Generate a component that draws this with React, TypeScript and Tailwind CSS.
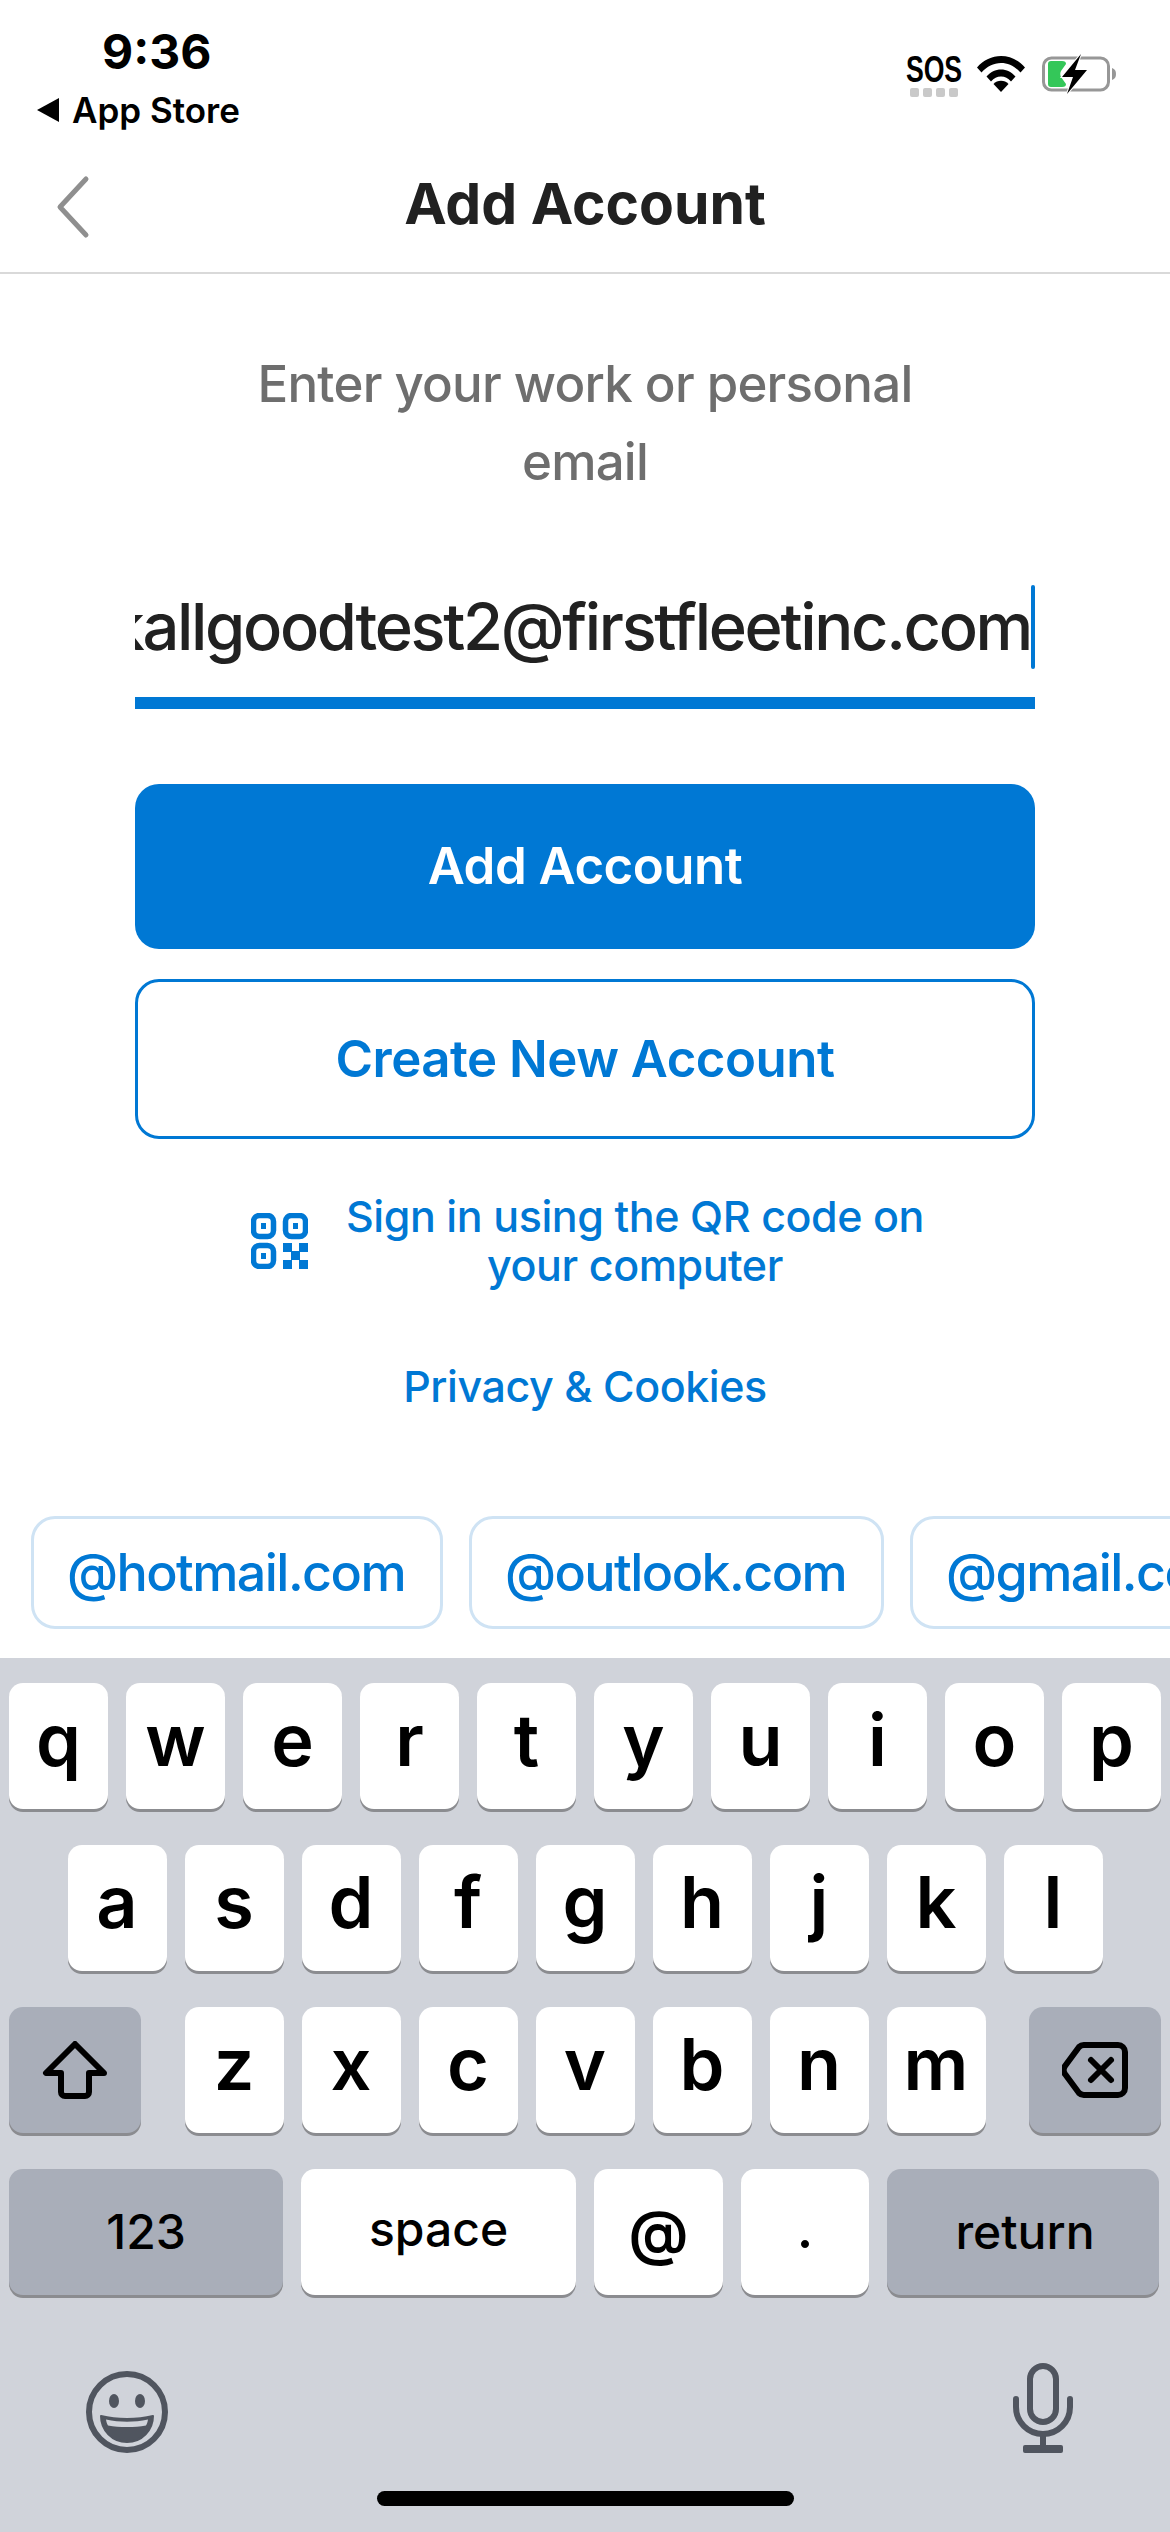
const row1 = ['q', 'w', 'e', 'r', 't', 'y', 'u', 'i', 'o', 'p'];
const row2 = ['a', 's', 'd', 'f', 'g', 'h', 'j', 'k', 'l'];
const row3 = ['z', 'x', 'c', 'v', 'b', 'n', 'm'];

function LetterKey({ label }: { label: string }) {
  return (
    <div className="flex h-[126px] w-[99px] items-center justify-center rounded-[14px] bg-white pb-[12px] text-[72px] font-semibold text-black shadow-[0_3px_0_#8b8c90]">
      {label}
    </div>
  );
}

function QrIcon() {
  return (
    <svg width="57" height="56" viewBox="0 0 57 56" fill="none" className="shrink-0">
      <rect x="2.500" y="2.500" width="20" height="21" rx="6" stroke="#0078d4" strokeWidth="5.500" />
      <rect x="34.500" y="2.500" width="20" height="21" rx="6" stroke="#0078d4" strokeWidth="5.500" />
      <rect x="2.500" y="32.500" width="20" height="21" rx="6" stroke="#0078d4" strokeWidth="5.500" />
      <rect x="10" y="10" width="5" height="6" fill="#0078d4" />
      <rect x="42" y="10" width="5" height="6" fill="#0078d4" />
      <rect x="10" y="40" width="5" height="6" fill="#0078d4" />
      <path d="M32 30h9v9h-9zM48 30h9v9h-9zM40 38h9v9h-9zM32 47h9v9h-9zM48 47h9v9h-9z" fill="#0078d4" />
    </svg>
  );
}

function StatusIcons() {
  return (
    <div className="flex items-start pt-[55px] pr-[52px]">
      <div className="mr-[16px] flex w-[54px] flex-col items-center">
        <span className="[transform:scaleX(0.74)] text-[36px] leading-[30px] font-bold text-black [font-family:'Liberation_Sans',sans-serif]">SOS</span>
        <div className="mt-[3px] flex gap-[4px]">
          <span className="h-[9px] w-[9px] rounded-[2px] bg-[#c9c9c9]" />
          <span className="h-[9px] w-[9px] rounded-[2px] bg-[#c9c9c9]" />
          <span className="h-[9px] w-[9px] rounded-[2px] bg-[#c9c9c9]" />
          <span className="h-[9px] w-[9px] rounded-[2px] bg-[#c9c9c9]" />
        </div>
      </div>
      <svg width="48" height="38" viewBox="0 0 48 38" className="mr-[17px]">
        <path d="M0 12.500C6.500 5 15 1 24 1s17.500 4 24 11.500l-4.500 5C38 11.500 31.500 8 24 8S10 11.500 4.500 17.500z" fill="#000" />
        <path d="M9.500 21.500C13.500 17 18.500 14.500 24 14.500s10.500 2.500 14.500 7l-4.500 5c-3-3.200-6-5-10-5s-7 1.800-10 5z" fill="#000" />
        <path d="M24 37l-7.500-8c2-2 4.500-3.200 7.500-3.200s5.500 1.200 7.500 3.200z" fill="#000" />
      </svg>
      <svg width="76" height="40" viewBox="0 0 76 40" className="-mt-[1px]">
        <rect x="1.500" y="4" width="65" height="32" rx="8" fill="none" stroke="#979797" strokeWidth="3" />
        <path d="M70 14c3 1 4 3 4 6s-1 5-4 6z" fill="#979797" />
        <path d="M6 10a3 3 0 0 1 3-3h11c3 0 4 1 4 3l-5 7c-1 2-1 4 0 6l5 7c0 2-1 3-4 3H9a3 3 0 0 1-3-3z" fill="#34c759" />
        <path d="M39 0L20 23h11l-6 17 20-24H33z" fill="#000" stroke="#fff" strokeWidth="2" paintOrder="stroke" />
      </svg>
    </div>
  );
}

export default function App() {
  return (
    <div className="flex h-[2532px] w-[1170px] flex-col overflow-hidden bg-white [font-family:Inter,'Liberation_Sans',sans-serif]">
      {/* Status bar */}
      <div className="flex h-[144px] items-start justify-between">
        <div className="flex flex-col pl-[37px]">
          <span className="mt-[29px] ml-[65px] text-[48px] leading-[46px] font-bold text-black">9:36</span>
          <div className="mt-[15px] flex items-center">
            <span className="mr-[13px] h-0 w-0 border-y-[12px] border-r-[22px] border-y-transparent border-r-black" />
            <span className="text-[35px] leading-[40px] font-semibold text-black">App Store</span>
          </div>
        </div>
        <StatusIcons />
      </div>

      {/* Nav bar */}
      <div className="grid h-[130px] grid-cols-[1fr_auto_1fr] items-center border-b-2 border-[#d9d9d9] pb-[2px]">
        <svg width="36" height="64" viewBox="0 0 36 64" fill="none" className="ml-[55px]">
          <path d="M31 4L5 32l26 28" stroke="#8f8f8f" strokeWidth="5" strokeLinecap="round" strokeLinejoin="round" />
        </svg>
        <h1 className="pb-[6px] text-[57px] font-bold text-[#212121]">Add Account</h1>
        <div />
      </div>

      {/* Form */}
      <div className="flex flex-1 flex-col items-center px-[135px]">
        <p className="mt-[71px] w-[700px] text-center text-[51px] leading-[78px] font-medium tracking-[-0.015em] text-[#6e6e6e]">
          Enter your work or personal email
        </p>
        <div className="mt-[84px] flex h-[124px] w-full justify-end overflow-hidden border-b-[12px] border-[#0078d4]">
          <span className="shrink-0 text-[65px] leading-[84px] font-medium tracking-[-0.036em] whitespace-nowrap text-[#212121]">kallgoodtest2@firstfleetinc.com</span>
          <span className="h-[84px] w-[4px] shrink-0 rounded-full bg-[#0078d4]" />
        </div>
        <div className="mt-[75px] flex h-[165px] w-full items-center justify-center rounded-[24px] bg-[#0078d4] text-[51px] font-semibold tracking-[-0.01em] text-white">
          Add Account
        </div>
        <div className="mt-[30px] flex h-[160px] w-full items-center justify-center rounded-[24px] border-[3px] border-[#0078d4] text-[51px] font-semibold tracking-[-0.01em] text-[#0078d4]">
          Create New Account
        </div>
        <div className="mt-[53px] flex w-full items-center justify-start pl-[116px]">
          <QrIcon />
          <p className="ml-[37px] w-[580px] text-center text-[43px] leading-[49px] font-medium tracking-[-0.01em] text-[#0078d4]">
            Sign in using the QR code on your computer
          </p>
        </div>
        <div className="mt-[71px] text-[43px] leading-[50px] font-medium tracking-[-0.01em] text-[#0078d4]">Privacy &amp; Cookies</div>
      </div>

      {/* Domain suggestions */}
      <div className="flex gap-[26px] overflow-hidden pb-[29px] pl-[31px] text-[52px] font-medium tracking-[-0.03em] text-[#0078d4]">
        <div className="flex h-[113px] w-[412px] shrink-0 items-center rounded-[24px] border-[3px] border-[#cfe3f4] pl-[33px]">@hotmail.com</div>
        <div className="flex h-[113px] w-[415px] shrink-0 items-center rounded-[24px] border-[3px] border-[#cfe3f4] pl-[33px]">@outlook.com</div>
        <div className="flex h-[113px] w-[412px] shrink-0 items-center rounded-[24px] border-[3px] border-[#cfe3f4] pl-[33px]">@gmail.com</div>
      </div>

      {/* Keyboard */}
      <div className="flex h-[874px] flex-col bg-[#d0d3da] pt-[25px]">
        <div className="flex justify-center gap-[18px]">
          {row1.map((k) => (
            <LetterKey key={k} label={k} />
          ))}
        </div>
        <div className="mt-[36px] flex justify-center gap-[18px]">
          {row2.map((k) => (
            <LetterKey key={k} label={k} />
          ))}
        </div>
        <div className="mt-[36px] flex justify-between px-[9px]">
          <div className="flex h-[126px] w-[132px] items-center justify-center rounded-[14px] bg-[#a9aeb9] shadow-[0_3px_0_#8b8c90]">
            <svg width="66" height="58" viewBox="0 0 66 58" fill="none">
              <path d="M33 3L4 32h15v19a4 4 0 0 0 4 4h20a4 4 0 0 0 4-4V32h15z" stroke="#000" strokeWidth="6" strokeLinejoin="round" />
            </svg>
          </div>
          <div className="flex gap-[18px]">
            {row3.map((k) => (
              <LetterKey key={k} label={k} />
            ))}
          </div>
          <div className="flex h-[126px] w-[132px] items-center justify-center rounded-[14px] bg-[#a9aeb9] shadow-[0_3px_0_#8b8c90]">
            <svg width="66" height="56" viewBox="0 0 66 56" fill="none">
              <path d="M22 3h34a7 7 0 0 1 7 7v36a7 7 0 0 1-7 7H22a7 7 0 0 1-5-2L3 32a7 7 0 0 1 0-8L17 5a7 7 0 0 1 5-2z" stroke="#000" strokeWidth="6" strokeLinejoin="round" />
              <path d="M29 18l20 20M49 18L29 38" stroke="#000" strokeWidth="6" strokeLinecap="round" />
            </svg>
          </div>
        </div>
        <div className="mt-[36px] flex gap-[18px] px-[9px] font-medium">
          <div className="flex h-[126px] w-[274px] items-center justify-center rounded-[14px] bg-[#a9aeb9] text-[48px] text-black shadow-[0_3px_0_#8b8c90]">123</div>
          <div className="flex h-[126px] w-[275px] items-center justify-center rounded-[14px] bg-white pb-[6px] text-[48px] text-black shadow-[0_3px_0_#8b8c90]">space</div>
          <div className="flex h-[126px] w-[129px] items-center justify-center rounded-[14px] bg-white text-[60px] font-semibold text-black shadow-[0_3px_0_#8b8c90]">@</div>
          <div className="flex h-[126px] w-[128px] items-center justify-center rounded-[14px] bg-white pb-[8px] text-[56px] text-black shadow-[0_3px_0_#8b8c90]">.</div>
          <div className="flex h-[126px] w-[272px] items-center justify-center rounded-[14px] bg-[#a9aeb9] pl-[4px] text-[48px] text-black shadow-[0_3px_0_#8b8c90]">return</div>
        </div>
        <div className="mt-[68px] flex items-end justify-between pr-[97px] pl-[86px]">
          <svg width="82" height="82" viewBox="0 0 82 82" fill="none">
            <circle cx="41" cy="41" r="38" stroke="#50555f" strokeWidth="6" />
            <ellipse cx="28" cy="30" rx="5" ry="7" fill="#50555f" />
            <ellipse cx="54" cy="30" rx="5" ry="7" fill="#50555f" />
            <path d="M15 45c8 2 17 3 26 3s18-1 26-3c0 14-11 26-26 26S15 59 15 45z" fill="#50555f" stroke="#50555f" strokeWidth="2" strokeLinejoin="round" />
            <path d="M20 48.500c7 1.500 14 2.200 21 2.200s14-.7 21-2.200c-.5 3-1 4.500-2 6-6 1-12 1.500-19 1.500s-13-.5-19-1.500c-1-1.500-1.500-3-2-6z" fill="#d0d3da" />
          </svg>
          <svg width="60" height="90" viewBox="0 0 60 90" fill="none">
            <rect x="17" y="3" width="26" height="56" rx="13" stroke="#50555f" strokeWidth="6" />
            <path d="M3 36v8c0 15 12 27 27 27s27-12 27-27v-8" stroke="#50555f" strokeWidth="6" strokeLinecap="round" />
            <path d="M30 71v14" stroke="#50555f" strokeWidth="6" />
            <rect x="10" y="82" width="40" height="8" rx="2" fill="#50555f" />
          </svg>
        </div>
        <div className="mt-[38px] h-[15px] w-[417px] self-center rounded-full bg-black" />
      </div>
    </div>
  );
}
